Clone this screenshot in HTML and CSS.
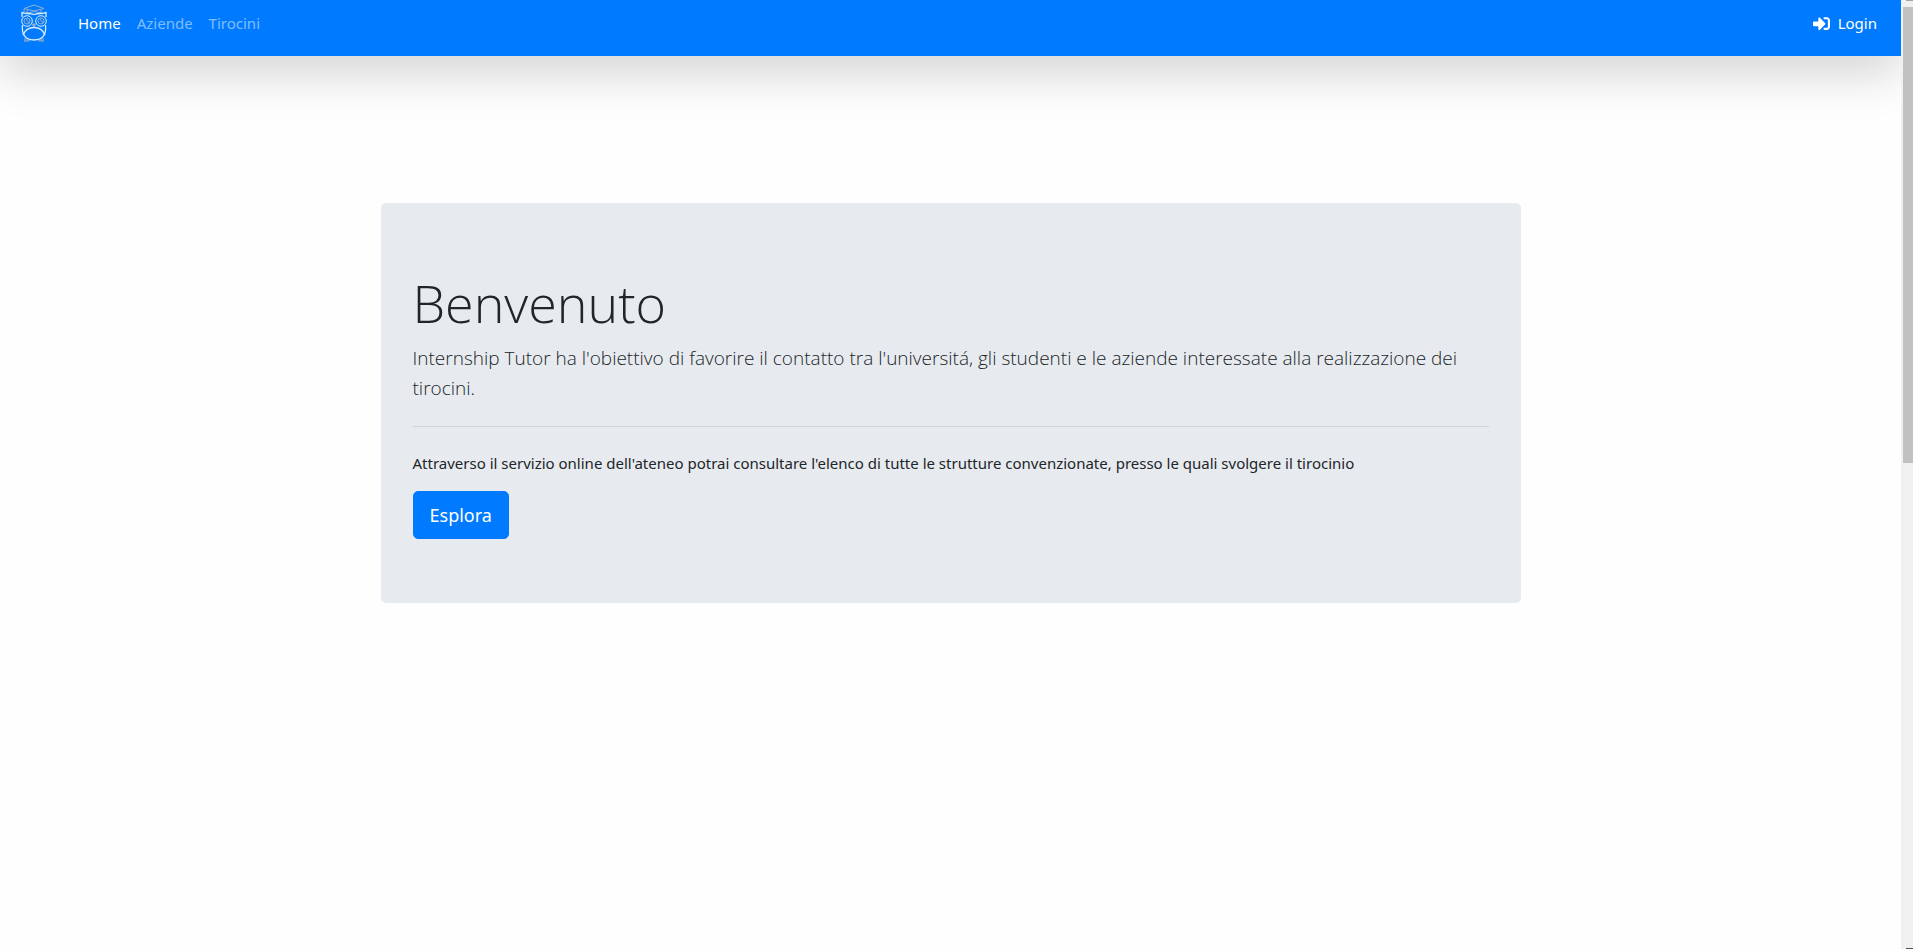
FILE: index.html
```html
<!DOCTYPE html>
<html lang="it">
<head>
<meta charset="utf-8">
<title>Internship Tutor</title>
<link rel="stylesheet" href="styles.css">
</head>
<body>
<div class="page">
  <header class="navbar">
    <a class="brand" href="#" aria-label="Internship Tutor">
      <svg class="owl" viewBox="0 0 28 38" fill="none" stroke="#d9ecff" stroke-width="1">
        <g stroke="#93aeca">
          <path d="M4 4.500 L14 1 L24 4.500 L14 7 Z M7 6 V9 M21 6 V9 M7 9 Q14 6 21 9 M4 5 V8"/>
          <path d="M5 34 V37 M7 34 V37 M9 35 V37 M19 35 V37 M21 34 V37 M23 34 V37 M4 37 H9.500 M18.500 37 H24"/>
          <circle cx="7" cy="17" r="3"/><circle cx="21" cy="17" r="3"/>
          <path d="M6 15 L9 19 M20 15 L23 19"/>
          <path d="M12.500 20 L14 24 L15.500 20 Z" fill="#93aeca"/>
        </g>
        <path stroke-width="1.300" d="M2 13 V8.500 C5 10 10 9 14 10.500 C18 9 23 10 26 8.500 V13"/>
        <circle cx="7" cy="17" r="5.300"/><circle cx="21" cy="17" r="5.300"/>
        <path stroke-width="1.300" d="M2.500 21 C1.500 30 5 36 14 36 C23 36 26.500 30 25.500 21"/>
        <path stroke-width="1.300" d="M3 31 C5 26 9 23.500 14 23.500 C19 23.500 23 26 25 31"/>
      </svg>
    </a>
    <nav class="links">
      <a class="link active" href="#">Home</a>
      <a class="link" href="#">Aziende</a>
      <a class="link" href="#">Tirocini</a>
    </nav>
    <a class="link active login" href="#">
      <svg class="icon" viewBox="0 0 512 512" fill="currentColor" aria-hidden="true"><path d="M416 448h-84c-6.600 0-12-5.400-12-12v-40c0-6.600 5.400-12 12-12h84c17.700 0 32-14.300 32-32V160c0-17.700-14.300-32-32-32h-84c-6.600 0-12-5.400-12-12V76c0-6.600 5.400-12 12-12h84c53 0 96 43 96 96v192c0 53-43 96-96 96zm-47-201L201 79c-15-15-41-4.500-41 17v96H24c-13.300 0-24 10.700-24 24v96c0 13.300 10.700 24 24 24h136v96c0 21.500 26 32 41 17l168-168c9.300-9.400 9.300-24.600 0-34z"/></svg>
      Login
    </a>
  </header>
  <main class="container">
    <section class="jumbotron">
      <h1 class="title">Benvenuto</h1>
      <p class="lead">Internship Tutor ha l'obiettivo di favorire il contatto tra l'universitá, gli studenti e le aziende interessate alla realizzazione dei tirocini.</p>
      <hr class="rule">
      <p class="text">Attraverso il servizio online dell'ateneo potrai consultare l'elenco di tutte le strutture convenzionate, presso le quali svolgere il tirocinio</p>
      <button class="button" type="button">Esplora</button>
    </section>
  </main>
</div>
<div class="scrollbar" aria-hidden="true">
  <div class="arrow"></div>
  <div class="thumb"></div>
  <div class="arrow arrow-down"></div>
</div>
</body>
</html>
```
FILE: styles.css
```css
* { box-sizing: border-box; }

body {
  display: flex;
  height: 100vh;
  margin: 0;
  overflow: hidden;
  background: #fefefe;
  color: #212529;
  font-family: "Noto Sans", "Open Sans", sans-serif;
  font-size: 15px;
  line-height: 24px;
}

.page {
  flex: 1;
  min-width: 0;
  overflow: hidden;
}

.navbar {
  display: flex;
  align-items: flex-start;
  height: 56px;
  padding: 4px 16px 0 20px;
  background: #007bff;
  box-shadow: 0 16px 48px rgba(0, 0, 0, .175);
}

.brand {
  margin-right: 22px;
}

.owl {
  display: block;
  width: 28px;
  height: 38px;
}

.links {
  display: flex;
  flex: 1;
}

.link {
  padding: 7px 8px;
  color: rgba(255, 255, 255, .5);
  text-decoration: none;
}

.active { color: #fff; }

.login {
  display: flex;
  align-items: center;
  gap: 8px;
}

.icon {
  width: 17px;
  height: 17px;
}

.container {
  max-width: 1140px;
  margin: 147px auto 0;
}

.jumbotron {
  padding: 64px 32px;
  border-radius: 5px;
  background: #e7ebef;
}

.title {
  margin: 0 0 4px;
  font-family: "Open Sans", "Noto Sans", sans-serif;
  font-size: 52px;
  font-weight: 300;
  line-height: 72px;
}

.lead {
  margin: 0;
  font-family: "Open Sans", "Noto Sans", sans-serif;
  font-size: 19px;
  font-weight: 300;
  line-height: 30px;
}

.rule {
  margin: 23px 0 24px;
  border: 0;
  border-top: 1px solid #cfd3d7;
}

.text { margin: 0 0 16px; }

.button {
  display: block;
  padding: 8px 16px;
  border: 1px solid #007bff;
  border-radius: 5px;
  background: #007bff;
  color: #fff;
  font: inherit;
  font-size: 18px;
  line-height: 30px;
}

.scrollbar {
  display: flex;
  flex-direction: column;
  align-items: flex-end;
  width: 12px;
  background: #f0f0f0;
}

.arrow {
  width: 7px;
  height: 1px;
  background: #a0a6ae;
}

.arrow-down {
  margin-top: auto;
  background: #505058;
}

.thumb {
  width: 10px;
  height: 48%;
  margin-top: 6px;
  background: #c1c1c1;
}
```
